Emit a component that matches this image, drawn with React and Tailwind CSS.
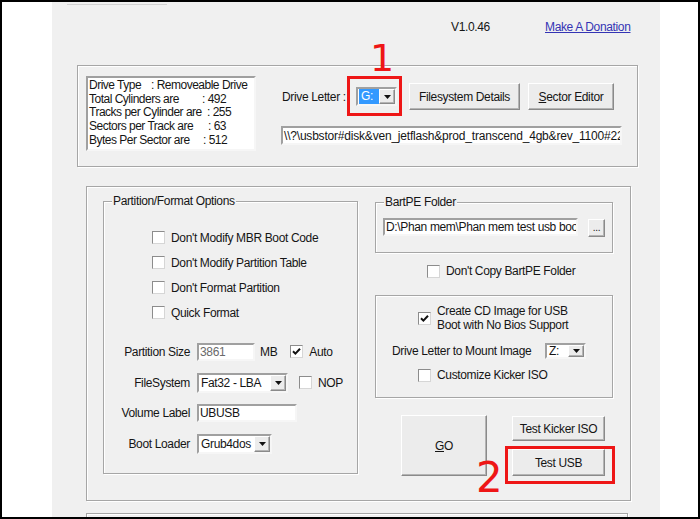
import React from 'react';

// =====================================
// Styles de base (contrôles Windows classiques)
// =====================================

const groupBox = 'border border-[#a6a6a6] shadow-[inset_1px_1px_0_#fff,1px_1px_0_#fff]';
const inset = 'bg-white border-2 border-t-[#a0a0a0] border-l-[#a0a0a0] border-b-[#f6f6f6] border-r-[#f6f6f6]';
const button = 'bg-[#ececec] border border-t-white border-l-white border-r-[#8a8a8a] border-b-[#8a8a8a] shadow-[inset_-1px_-1px_0_#b4b4b4] flex items-center justify-center';

const Check = ({ checked }) => (
  <span className="w-[13px] h-[13px] shrink-0 bg-white border border-t-[#8c8c8c] border-l-[#8c8c8c] border-b-[#d6d6d6] border-r-[#d6d6d6] flex items-center justify-center">
    {checked && (
      <svg width="9" height="9" viewBox="0 0 9 9">
        <polyline points="1,4.2 3.4,6.6 8,1.8" fill="none" stroke="#111" strokeWidth="2" />
      </svg>
    )}
  </span>
);

const Arrow = () => (
  <span className={`w-[16px] h-full shrink-0 ${button}`}>
    <svg width="7" height="4" viewBox="0 0 7 4">
      <polygon points="0,0 7,0 3.5,4" fill="#111" />
    </svg>
  </span>
);

const Combo = ({ className, children }) => (
  <div className={`flex ${inset} ${className}`}>
    <div className="flex-1 flex items-center pl-[2px] overflow-hidden whitespace-nowrap">{children}</div>
    <Arrow />
  </div>
);

const CheckRow = ({ checked, children, className }) => (
  <div className={`flex items-center gap-[6px] ${className}`}>
    <Check checked={checked} />
    <span>{children}</span>
  </div>
);

const Legend = ({ children }) => (
  <span className="self-start -mt-[8px] ml-[8px] px-[1px] bg-[#f0f0f0] h-[14px]">{children}</span>
);

const FormRow = ({ label, className, children }) => (
  <div className={`flex items-center ${className}`}>
    <span className="w-[86px] text-right shrink-0">{label}</span>
    <div className="ml-[7px] flex items-center">{children}</div>
  </div>
);

const App = () => {
  const infos = [
    ['w-[62px]', 'Drive Type', 'Removeable Drive'],
    ['w-[113px]', 'Total Cylinders are', '492'],
    ['w-[118px]', 'Tracks per Cylinder are', '255'],
    ['w-[119px]', 'Sectors per Track are', '63'],
    ['w-[114px]', 'Bytes Per Sector are', '512'],
  ];

  return (
    <div className="w-[700px] h-[519px] border-2 border-black bg-white flex overflow-hidden font-['Liberation_Sans',Arial,sans-serif] text-[12px] leading-[14px] text-[#151515] tracking-[-0.35px]">
      <div className="w-[50px] shrink-0" />

      <div className="w-[608px] shrink-0 h-full bg-[#f0f0f0] flex flex-col overflow-hidden">
        {/* En-tête */}
        <div className="h-[63px] shrink-0 flex flex-col">
          <div className="ml-[15px] mt-[2px] h-px w-[100px] bg-[#d2d2d2]" />
          <div className="mt-[15px] flex pl-[399px]">
            <span className="w-[94px]">V1.0.46</span>
            <span className="text-[#3434b4] underline">Make A Donation</span>
          </div>
        </div>

        {/* Infos du lecteur */}
        <div className={`ml-[25px] w-[561px] h-[102px] shrink-0 flex items-start pt-[10px] pl-[8px] ${groupBox}`}>
          <div className={`w-[170px] h-[75px] shrink-0 pl-[1px] pt-[1px] leading-[13.7px] tracking-[-0.5px] whitespace-nowrap ${inset}`}>
            {infos.map(([w, label, value]) => (
              <div key={label} className="flex">
                <span className={`${w} shrink-0`}>{label}</span>
                <span>: {value}</span>
              </div>
            ))}
          </div>

          <div className="ml-[25px] mt-[7px] flex flex-col">
            <div className="flex items-center h-[27px]">
              <span className="w-[75px] pl-[1px]">Drive Letter :</span>
              <div className="relative">
                <div className={`flex w-[41px] h-[19px] ${inset}`}>
                  <div className="flex-1 flex items-center pl-[1px]">
                    <span className="bg-[#3399ff] text-white h-[15px] w-[20px] pl-[2px] leading-[15px]">G:</span>
                  </div>
                  <Arrow />
                </div>
                <div className="absolute -left-[9px] -top-[11px] w-[55px] h-[40px] border-[3px] border-[#ee1616]" />
                <span className="absolute left-[14px] -top-[48px] text-[38px] leading-none text-[#ee1616] font-['DejaVu_Sans',sans-serif] tracking-normal">1</span>
              </div>
              <div className={`ml-[12px] w-[111px] h-[27px] ${button}`}>Filesystem Details</div>
              <div className={`ml-[8px] w-[86px] h-[27px] ${button}`}>
                <span><span className="underline">S</span>ector Editor</span>
              </div>
            </div>
            <div className={`mt-[16px] w-[341px] h-[19px] flex items-center px-[1px] overflow-hidden whitespace-nowrap tracking-[-0.2px] ${inset}`}>
              {'\\\\?\\usbstor#disk&ven_jetflash&prod_transcend_4gb&rev_1100#22'}
            </div>
          </div>
        </div>

        {/* Options principales */}
        <div className={`mt-[19px] ml-[34px] w-[545px] h-[315px] shrink-0 flex items-start pt-[14px] pl-[16px] ${groupBox}`}>
          <div className={`w-[255px] h-[273px] shrink-0 flex flex-col ${groupBox}`}>
            <Legend>Partition/Format Options</Legend>
            <div className="mt-[17px] flex flex-col pl-[48px]">
              <CheckRow className="h-[25px]">Don't Modify MBR Boot Code</CheckRow>
              <CheckRow className="h-[25px]">Don't Modify Partition Table</CheckRow>
              <CheckRow className="h-[25px]">Don't Format Partition</CheckRow>
              <CheckRow className="h-[25px]">Quick Format</CheckRow>
            </div>
            <div className="mt-[11px] flex flex-col">
              <FormRow label="Partition Size" className="h-[31px]">
                <div className={`w-[58px] h-[18px] flex items-center pl-[1px] text-[#6a6a6a] ${inset}`}>3861</div>
                <span className="ml-[5px]">MB</span>
                <CheckRow checked className="ml-[13px] gap-[5px]">Auto</CheckRow>
              </FormRow>
              <FormRow label="FileSystem" className="h-[31px]">
                <Combo className="w-[91px] h-[20px]">Fat32 - LBA</Combo>
                <CheckRow className="ml-[11px] gap-[5px]">NOP</CheckRow>
              </FormRow>
              <FormRow label="Volume Label" className="h-[30px]">
                <div className={`w-[100px] h-[18px] flex items-center pl-[1px] ${inset}`}>UBUSB</div>
              </FormRow>
              <FormRow label="Boot Loader" className="h-[31px]">
                <Combo className="w-[75px] h-[20px]">Grub4dos</Combo>
              </FormRow>
            </div>
          </div>

          <div className="ml-[17px] w-[238px] shrink-0 flex flex-col">
            <div className={`mt-[1px] h-[51px] flex flex-col ${groupBox}`}>
              <Legend>BartPE Folder</Legend>
              <div className="mt-[9px] flex items-start pl-[7px]">
                <div className={`w-[195px] h-[18px] flex items-center pl-[1px] overflow-hidden whitespace-nowrap ${inset}`}>
                  D:\Phan mem\Phan mem test usb boot
                </div>
                <div className={`ml-[10px] mt-[1px] w-[17px] h-[18px] text-[10px] ${button}`}>...</div>
              </div>
            </div>

            <CheckRow className="mt-[11px] h-[14px] pl-[52px]">Don't Copy BartPE Folder</CheckRow>

            <div className={`mt-[17px] h-[103px] flex flex-col ${groupBox}`}>
              <div className="mt-[8px] pl-[42px] flex items-center gap-[6px]">
                <Check checked />
                <span>Create CD Image for USB<br />Boot with No Bios Support</span>
              </div>
              <div className="mt-[11px] h-[16px] pl-[16px] flex items-center">
                <span className="w-[153px] shrink-0">Drive Letter to Mount Image</span>
                <Combo className="w-[41px] h-[16px]">Z:</Combo>
              </div>
              <CheckRow className="mt-[9px] h-[14px] pl-[42px]">Customize Kicker ISO</CheckRow>
            </div>

            <div className="mt-[17px] flex">
              <div className={`ml-[26px] w-[86px] h-[61px] ${button}`}>
                <span><span className="underline">G</span>O</span>
              </div>
              <div className="ml-[25px] flex flex-col">
                <div className={`mt-[1px] w-[93px] h-[25px] ${button}`}>Test Kicker ISO</div>
                <div className="relative mt-[8px]">
                  <div className={`w-[93px] h-[27px] ${button}`}>Test USB</div>
                  <div className="absolute -left-[7px] -top-[3px] w-[110px] h-[38px] border-[3px] border-[#ee1616]" />
                  <span className="absolute -left-[36px] top-[8px] text-[42px] leading-none text-[#ee1616] font-['DejaVu_Sans',sans-serif] tracking-normal">2</span>
                </div>
              </div>
            </div>
          </div>
        </div>

        {/* Cadre suivant (coupé) */}
        <div className={`mt-[12px] ml-[34px] w-[542px] h-[20px] shrink-0 ${groupBox}`} />
      </div>
    </div>
  );
};

export default App;
